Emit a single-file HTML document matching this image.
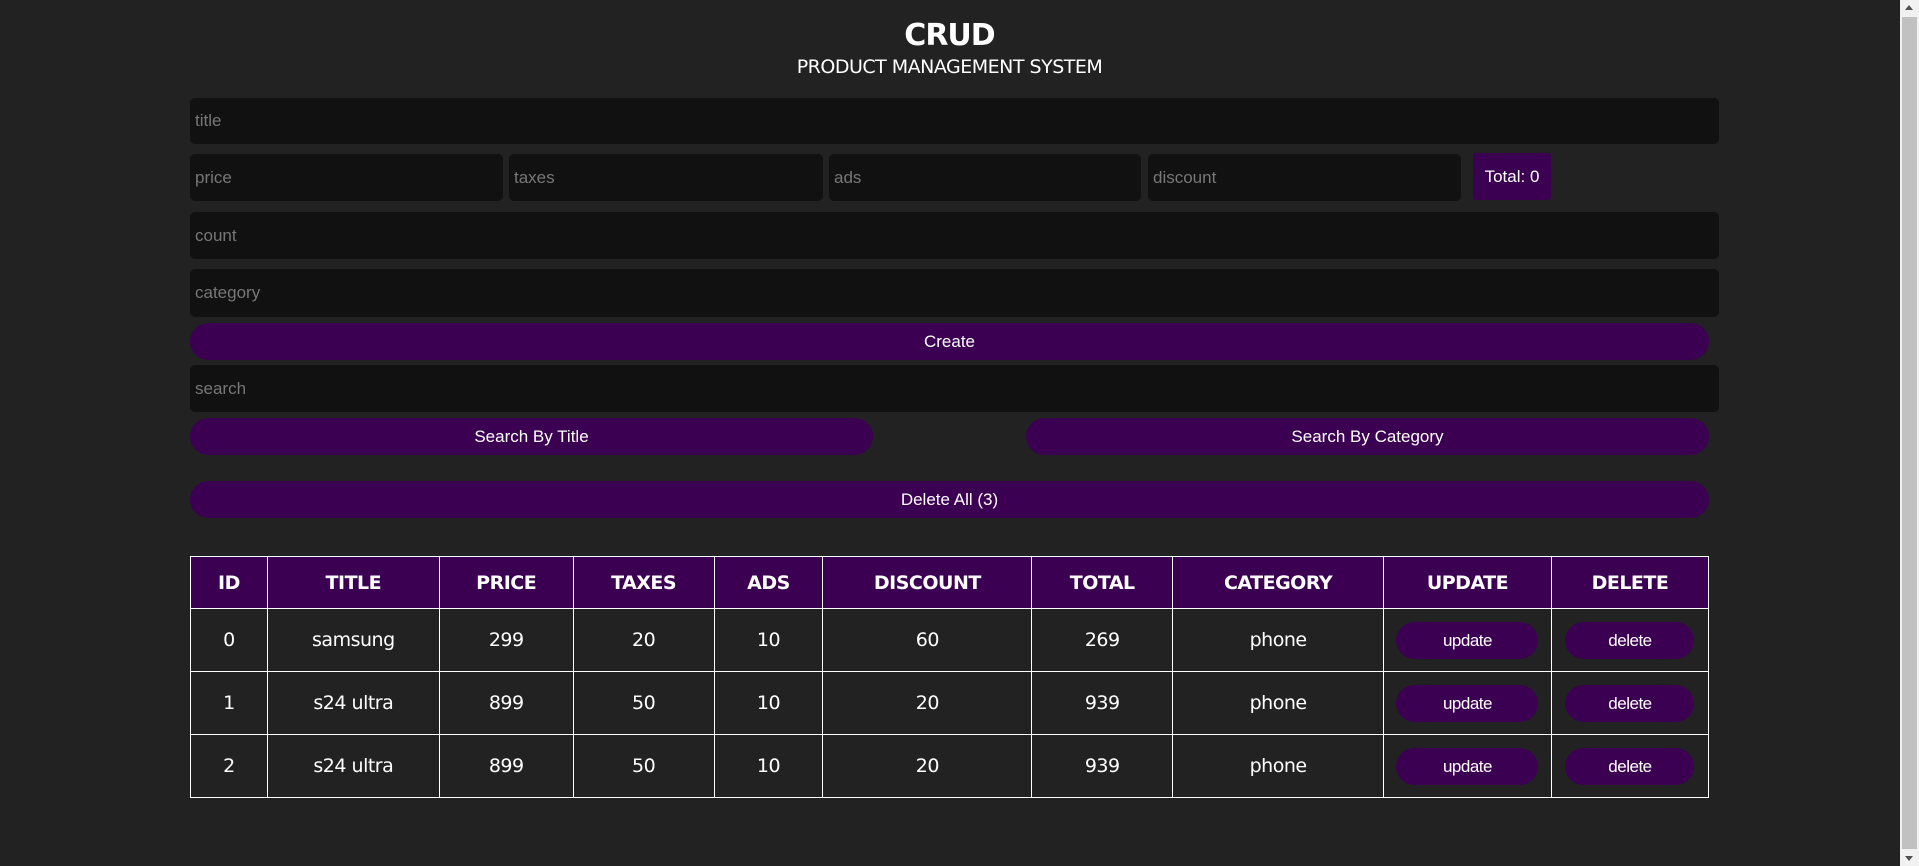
<!DOCTYPE html>
<html><head><style>
*{box-sizing:border-box;margin:0;padding:0}
body{width:1919px;height:866px;background:#222;overflow:hidden;position:relative;font-family:"Liberation Sans",Arial,sans-serif;color:#fff}
.a{position:absolute}
.inp{position:absolute;background:#111;border-radius:5px;color:#777;font-size:17px;padding-left:5px;display:flex;align-items:center}
.btn{position:absolute;background:#3b0051;border-radius:20px;color:#fff;font-size:17px;display:flex;align-items:center;justify-content:center}
h1{position:absolute;left:0;width:1899px;text-align:center;top:18px;font:bold 30px "DejaVu Sans",sans-serif;letter-spacing:-1px}
h2{position:absolute;left:0;width:1899px;text-align:center;top:56px;font:normal 19px "DejaVu Sans",sans-serif;letter-spacing:-0.5px}
table{position:absolute;left:190px;top:556px;width:1519px;border-collapse:collapse;font-family:"DejaVu Sans",sans-serif;font-size:19px}
td,th{border:1px solid #fff;text-align:center;letter-spacing:-0.5px}
th{background:#3b0051;height:52px;font-weight:bold}
td{height:63px}
.tb{display:inline-block;background:#3b0051;border-radius:20px;height:37px;line-height:37px;font-family:"Liberation Sans",Arial,sans-serif;font-size:17px}
</style></head><body>
<h1>CRUD</h1>
<h2>PRODUCT MANAGEMENT SYSTEM</h2>
<div class="inp" style="left:190px;top:98px;width:1529px;height:46px">title</div>
<div class="inp" style="left:190px;top:154px;width:313px;height:47px">price</div>
<div class="inp" style="left:509px;top:154px;width:314px;height:47px">taxes</div>
<div class="inp" style="left:829px;top:154px;width:312px;height:47px">ads</div>
<div class="inp" style="left:1148px;top:154px;width:313px;height:47px">discount</div>
<div class="a" style="left:1473px;top:153px;width:78px;height:47px;background:#3b0051;border-radius:3px;display:flex;align-items:center;justify-content:center;font-size:17px">Total: 0</div>
<div class="inp" style="left:190px;top:212px;width:1529px;height:47px">count</div>
<div class="inp" style="left:190px;top:269px;width:1529px;height:48px">category</div>
<div class="btn" style="left:190px;top:323px;width:1519px;height:37px">Create</div>
<div class="inp" style="left:190px;top:365px;width:1529px;height:47px">search</div>
<div class="btn" style="left:190px;top:418px;width:683px;height:37px">Search By Title</div>
<div class="btn" style="left:1026px;top:418px;width:683px;height:37px">Search By Category</div>
<div class="btn" style="left:190px;top:481px;width:1519px;height:37px">Delete All (3)</div>
<table>
<colgroup><col style="width:77px"><col style="width:172px"><col style="width:134px"><col style="width:141px"><col style="width:109px"><col style="width:209px"><col style="width:141px"><col style="width:211px"><col style="width:168px"><col style="width:157px"></colgroup>
<tr><th>ID</th><th>TITLE</th><th>PRICE</th><th>TAXES</th><th>ADS</th><th>DISCOUNT</th><th>TOTAL</th><th>CATEGORY</th><th>UPDATE</th><th>DELETE</th></tr>
<tr><td>0</td><td>samsung</td><td>299</td><td>20</td><td>10</td><td>60</td><td>269</td><td>phone</td><td><span class="tb" style="width:142px">update</span></td><td><span class="tb" style="width:129px">delete</span></td></tr>
<tr><td>1</td><td>s24 ultra</td><td>899</td><td>50</td><td>10</td><td>20</td><td>939</td><td>phone</td><td><span class="tb" style="width:142px">update</span></td><td><span class="tb" style="width:129px">delete</span></td></tr>
<tr><td>2</td><td>s24 ultra</td><td>899</td><td>50</td><td>10</td><td>20</td><td>939</td><td>phone</td><td><span class="tb" style="width:142px">update</span></td><td><span class="tb" style="width:129px">delete</span></td></tr>
</table>
<div class="a" style="left:1900px;top:0;width:19px;height:866px;background:#f1f1f1"></div>
<div class="a" style="left:1902px;top:17px;width:15px;height:832px;background:#c1c1c1"></div>
<div class="a" style="left:1905px;top:5px;width:0;height:0;border-left:4px solid transparent;border-right:4px solid transparent;border-bottom:5px solid #505050"></div>
<div class="a" style="left:1905px;top:856px;width:0;height:0;border-left:4px solid transparent;border-right:4px solid transparent;border-top:5px solid #505050"></div>
</body></html>
